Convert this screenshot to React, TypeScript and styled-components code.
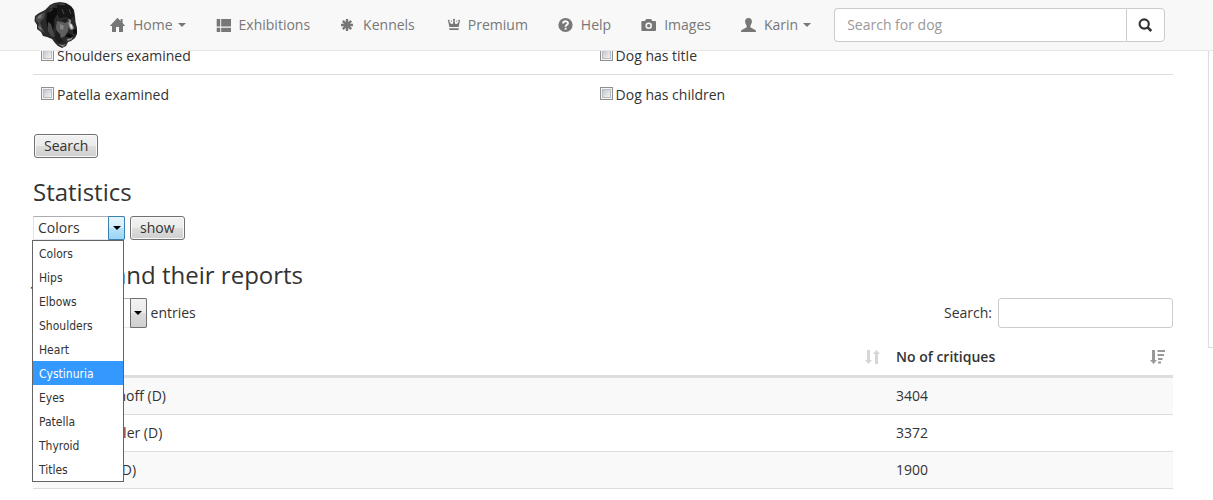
import React from 'react';
import styled, { createGlobalStyle } from 'styled-components';

const GlobalStyle = createGlobalStyle`
  *, *::before, *::after { box-sizing: border-box; }
  body {
    margin: 0;
    background: #fff;
    color: #333;
    font: 14px/20px "Open Sans", "Noto Sans", sans-serif;
  }
  button, input, select { font: inherit; color: inherit; margin: 0; }
`;

const Navbar = styled.header`
  position: fixed;
  inset: 0 0 auto 0;
  z-index: 10;
  display: flex;
  align-items: center;
  height: 51px;
  padding: 0 48px 0 33px;
  background: #f8f8f8;
  border-bottom: 1px solid #e7e7e7;
`;

const Brand = styled.a`
  display: block;
  flex: none;
  width: 46px;
  height: 50px;
  margin-right: 16px;
`;

const NavLinks = styled.nav`
  display: flex;
  flex: none;
`;

const NavLink = styled.a`
  display: flex;
  align-items: center;
  gap: 8px;
  padding: 15px;
  height: 50px;
  color: #777;
  text-decoration: none;
  white-space: nowrap;
`;

const Icon = styled.svg`
  display: block;
  flex: none;
  width: 15px;
  height: 16px;
  fill: currentColor;
`;

const Caret = styled.span`
  margin-left: -3px;
  border-top: 4px solid currentColor;
  border-left: 4px solid transparent;
  border-right: 4px solid transparent;
`;

const DogSearch = styled.form`
  display: flex;
  flex: 1;
  height: 34px;
  margin-left: 8px;
`;

const DogInput = styled.input`
  flex: 1;
  min-width: 0;
  padding: 6px 12px;
  border: 1px solid #ccc;
  border-right: 0;
  border-radius: 4px 0 0 4px;
  background: #fff;
  &::placeholder { color: #999; opacity: 1; }
`;

const DogButton = styled.button`
  display: flex;
  align-items: center;
  justify-content: center;
  width: 39px;
  padding: 0;
  border: 1px solid #ccc;
  border-radius: 0 4px 4px 0;
  background: #fff;
`;

const Page = styled.div`
  display: flex;
  align-items: flex-start;
  padding-top: 37px;
`;

const Main = styled.main`
  flex: 1;
  min-width: 0;
  padding: 0 35px 0 33px;
`;

const SidePanel = styled.aside`
  flex: none;
  width: 5px;
  height: 311px;
  border: 1px solid #ddd;
  border-right: 0;
`;

const CheckRow = styled.div`
  display: grid;
  grid-template-columns: 49fr 51fr;
  padding: 9px 0 8px;
  & + & { border-top: 1px solid #ddd; padding-top: 10px; }
`;

const CheckLabel = styled.label`
  display: flex;
  align-items: center;
  gap: 3px;
  padding-left: 8px;
`;

const Checkbox = styled.input`
  appearance: none;
  width: 13px;
  height: 13px;
  margin: 0 0 3px;
  border: 1px solid #8e8f8f;
  background: linear-gradient(135deg, #b4b9c2, #f6f6f6 85%);
  box-shadow: inset 0 0 0 1px #f4f4f4, inset 0 0 0 2px #b9bcc2;
`;

const PushButton = styled.button`
  height: 24px;
  padding: 0 9px;
  border: 1px solid #707070;
  border-radius: 3px;
  background: linear-gradient(#f2f2f2, #ebebeb 50%, #dddddd 50%, #cfcfcf);
  box-shadow: inset 0 0 0 1px #fafafa;
  line-height: 20px;
`;

const FormActions = styled.div`
  padding: 21px 1px 0;
`;

const Heading = styled.h2`
  margin: 0;
  font-size: 24px;
  line-height: 26px;
  font-weight: 400;
`;

const StatsHeading = styled(Heading)`
  margin: 21px 0 11px;
`;

const StatsRow = styled.div`
  display: flex;
  gap: 5px;
`;

const SelectBox = styled.div<{ $width: number; $height: number }>`
  position: relative;
  width: ${(p) => p.$width}px;
  height: ${(p) => p.$height}px;
`;

const Select = styled.select`
  appearance: none;
  width: 100%;
  height: 100%;
  padding: 0 20px 0 4px;
  border: 1px solid #abadb3;
  border-color: #abadb3 #dbdfe6 #e3e9ef #e2e3ea;
  border-radius: 0;
  background: #fff;
`;

const Arrow = styled.span<{ $active?: boolean }>`
  position: absolute;
  top: 0;
  right: 0;
  bottom: 0;
  display: flex;
  align-items: center;
  justify-content: center;
  width: 17px;
  pointer-events: none;
  border: 1px solid ${(p) => (p.$active ? '#3c7fb1' : '#707070')};
  border-radius: 0 2px 2px 0;
  background: ${(p) =>
    p.$active
      ? 'linear-gradient(#e6f5fd, #d2edfc 50%, #b9e3fa 50%, #9bd5f5)'
      : 'linear-gradient(#f2f2f2, #ebebeb 50%, #dddddd 50%, #cfcfcf)'};
  &::after {
    content: "";
    border-top: 4px solid #000;
    border-left: 4px solid transparent;
    border-right: 4px solid transparent;
  }
`;

const OptionList = styled.ul`
  position: absolute;
  top: 100%;
  left: -1px;
  z-index: 5;
  width: 92px;
  margin: 0;
  padding: 0;
  list-style: none;
  border: 1px solid #646464;
  background: #fff;
  font: 12px/22px "DejaVu Sans Condensed", "Noto Sans", sans-serif;
`;

const Option = styled.li<{ $active: boolean }>`
  padding: 2px 0 0 6px;
  color: ${(p) => (p.$active ? '#fff' : '#333')};
  background: ${(p) => (p.$active ? '#3399ff' : 'transparent')};
`;

const JudgesHeading = styled(Heading)`
  margin: 22px 0 10px;
`;

const TableTools = styled.div`
  display: flex;
  justify-content: space-between;
  height: 30px;
`;

const ToolLabel = styled.label`
  display: flex;
  align-items: center;
  gap: 4px;
`;

const FilterLabel = styled(ToolLabel)`
  gap: 6px;
`;

const FilterInput = styled.input`
  width: 175px;
  height: 30px;
  padding: 5px 10px;
  border: 1px solid #ccc;
  border-radius: 3px;
`;

const Table = styled.table`
  width: 100%;
  margin-top: 8px;
  border-collapse: separate;
  border-spacing: 0;
  table-layout: fixed;
`;

const Th = styled.th<{ $wide?: boolean }>`
  width: ${(p) => (p.$wide ? '75%' : '25%')};
  padding: 11px 8px 8px;
  border-bottom: 3px solid #ddd;
  text-align: left;
  font-weight: 600;
`;

const ThInner = styled.div`
  display: flex;
  align-items: center;
  justify-content: space-between;
  height: 20px;
`;

const Tr = styled.tr`
  &:nth-child(odd) { background: #f9f9f9; }
`;

const Td = styled.td`
  padding: 8px;
  border-bottom: 1px solid #ddd;
`;

const SortIcon = styled(Icon)<{ $faint?: boolean }>`
  color: ${(p) => (p.$faint ? '#d6d6d6' : '#999')};
`;

const DogLogo = () => (
  <svg width="46" height="50" viewBox="0 0 46 50" role="img" aria-label="Dog head">
    <defs>
      <filter id="fur" x="-20%" y="-20%" width="140%" height="140%">
        <feGaussianBlur stdDeviation="0.7" />
      </filter>
      <filter id="edge">
        <feGaussianBlur stdDeviation="0.5" />
      </filter>
    </defs>
    <path
      filter="url(#edge)"
      fill="#2b2b2b"
      d="M17 5 21 3 27 2 33 3 38 6 41 10 42 16 42.500 22 44 28 44 34 42 38 38 41 35 42 33 46 29 48 25 46 22 43 19 39 14 37 10 36 8 32 4 29 4 25 1.500 21 2 16 6 13 12 10Z"
    />
    <g filter="url(#fur)">
      <path fill="#4d4d4d" d="M3 17 8 14 12 12 11 18 7 22 9 28 12 33 8 31 5 27 6 23 3 21Z" />
      <path fill="#767676" d="M5 16 9 14 8 18 5 19ZM5 26 8 27 9 30 6 29Z" />
      <path fill="#111" d="M14 13 20 8 25 8 24 14 21 20 21 28 18 33 15 28 13 20Z" />
      <path fill="#464646" d="M15 22 18 24 20 31 22 37 18 36 15 31Z" />
      <path fill="#121212" d="M24 5 33 4 39 8 41 16 38 19 33 17 27 18 24 14Z" />
      <path fill="#5f5f5f" d="M24 21 29 22 34 21 36 26 35 31 32 36 28 38 24 34 23 27Z" />
      <path fill="#868686" d="M27 24 31 26 30 30 27 29ZM35 19 38 20 38 23 36 23Z" />
      <path fill="#1a1a1a" d="M29 20 33 19 34 22 31 23ZM23 30 27 34 28 39 31 42 26 43 22 38Z" />
      <path fill="#a8a8a8" d="M35 22 39 24 41 28 39 30 37 29 36 26Z" />
      <path fill="#e2e2e2" d="M37 24 39 25 39 28 38 28Z" />
      <path fill="#0a0a0a" d="M40 30 43 29 44 33 41 34ZM32 36 36 33 40 36 37 38Z" />
      <path fill="#8b8b8b" d="M34 39 38 38 40 37 38 40 34 41ZM25 44 30 45 33 44 30 47Z" />
      <path fill="none" stroke="#4a4a4a" d="M17 8 22 5M26 4 32 5M16 12 20 9M29 9 31 14M36 9 38 14" />
    </g>
  </svg>
);

const HomeIcon = () => (
  <Icon viewBox="0 0 15 16" aria-hidden="true">
    <path d="M7.5 .8 10.6 4V2h2v4.1L15 8.7v.4h-2V15H9V10H6v5H2V9.1H0v-.4Z" />
  </Icon>
);

const ListIcon = () => (
  <Icon viewBox="0 0 15 16" aria-hidden="true">
    <path d="M.7 2h3.500v3.600H.7ZM5.200 2H15v3.600H5.200ZM.7 5.600h3.500v4H.7ZM5.200 5.600H15v4H5.200ZM.7 10.700h3.500V15H.7ZM5.200 10.700H15V15H5.200Z" />
  </Icon>
);

const AsteriskIcon = () => (
  <Icon viewBox="0 0 15 16" aria-hidden="true">
    <path
      stroke="currentColor"
      strokeWidth="2.4"
      d="M7 2v12M1 8h12M2.800 3.800 11.200 12.200M11.200 3.800 2.800 12.200"
    />
  </Icon>
);

const CrownIcon = () => (
  <Icon viewBox="0 0 15 16" aria-hidden="true">
    <path d="M3.500 3.500 5.600 6.500 6.500 7 8 6.800 8.500 3h1L10 6.800 11.500 7 12.400 6.500 14.500 3.500 14.900 4 13.600 10H4.400L3.100 4ZM4.400 11.200h9.200V13H4.400Z" />
    <circle cx="3.700" cy="3.600" r="0.9" />
    <circle cx="6.300" cy="4.100" r="0.7" />
    <circle cx="9" cy="2.800" r="1" />
    <circle cx="11.700" cy="4.100" r="0.7" />
    <circle cx="14.100" cy="3.600" r="0.9" />
  </Icon>
);

const HelpIcon = () => (
  <Icon viewBox="0 0 15 16" aria-hidden="true">
    <circle cx="7.5" cy="8" r="7.100" />
    <path fill="none" stroke="#f8f8f8" strokeWidth="1.9" d="M5 6.600C5 3.400 10 3.500 10 6.200 10 7.800 7.600 7.800 7.600 9.800" />
    <path fill="#f8f8f8" d="M6.600 10.800h2v1.800h-2Z" />
  </Icon>
);

const CameraIcon = () => (
  <Icon viewBox="0 0 15 16" aria-hidden="true">
    <path
      fillRule="evenodd"
      d="M1 4h3l1.200-2h4.900l1.200 2H14q1 0 1 1v8q0 1-1 1H1.400q-1 0-1-1V5Q.4 4 1 4ZM7.700 5.100a3.600 3.600 0 1 0 .01 0ZM7.700 5.100a3.600 3.600 0 1 1-.01 0Z"
    />
    <circle cx="7.700" cy="8.700" r="2.500" fill="none" stroke="#f8f8f8" strokeWidth="1.500" />
  </Icon>
);

const UserIcon = () => (
  <Icon viewBox="0 0 15 16" aria-hidden="true">
    <path d="M7.500.9C9.800.9 11 2.500 10.900 4.700 10.800 6.700 9.800 7.600 9.400 8.700c-.3 1 .2 1.900 1.200 2.400l3.300 1.600c.7.4 1.100 1.100 1.100 2.300H0c0-1.200.4-1.900 1.100-2.300l3.300-1.600c1-.5 1.500-1.400 1.200-2.400C5.200 7.600 4.200 6.700 4.100 4.700 4 2.500 5.200.9 7.500.9Z" />
  </Icon>
);

const SearchIcon = () => (
  <Icon viewBox="0 0 15 16" aria-hidden="true">
    <circle cx="6.200" cy="7" r="4.600" fill="none" stroke="currentColor" strokeWidth="2.100" />
    <path stroke="currentColor" strokeWidth="2.600" d="M9.600 10.400 13.300 14" />
  </Icon>
);

const navItems = [
  { label: 'Home', icon: <HomeIcon />, menu: true },
  { label: 'Exhibitions', icon: <ListIcon /> },
  { label: 'Kennels', icon: <AsteriskIcon /> },
  { label: 'Premium', icon: <CrownIcon /> },
  { label: 'Help', icon: <HelpIcon /> },
  { label: 'Images', icon: <CameraIcon /> },
  { label: 'Karin', icon: <UserIcon />, menu: true },
];

const filters = [
  ['Shoulders examined', 'Dog has title'],
  ['Patella examined', 'Dog has children'],
];

const statistics = [
  'Colors', 'Hips', 'Elbows', 'Shoulders', 'Heart',
  'Cystinuria', 'Eyes', 'Patella', 'Thyroid', 'Titles',
];

const judges = [
  { name: 'Ulrich Bischhoff (D)', critiques: 3404 },
  { name: 'Werner Kessler (D)', critiques: 3372 },
  { name: 'Ute Fischer (D)', critiques: 1900 },
];

export default function App() {
  return (
    <>
      <GlobalStyle />
      <Navbar>
        <Brand href="#"><DogLogo /></Brand>
        <NavLinks>
          {navItems.map((item) => (
            <NavLink href="#" key={item.label}>
              {item.icon}
              {item.label}
              {item.menu && <Caret />}
            </NavLink>
          ))}
        </NavLinks>
        <DogSearch>
          <DogInput type="text" placeholder="Search for dog" aria-label="Search for dog" />
          <DogButton type="button" aria-label="Search"><SearchIcon /></DogButton>
        </DogSearch>
      </Navbar>
      <Page>
        <Main>
          {filters.map((row) => (
            <CheckRow key={row[0]}>
              {row.map((label) => (
                <CheckLabel key={label}>
                  <Checkbox type="checkbox" />
                  {label}
                </CheckLabel>
              ))}
            </CheckRow>
          ))}
          <FormActions>
            <PushButton type="button">Search</PushButton>
          </FormActions>

          <StatsHeading>Statistics</StatsHeading>
          <StatsRow>
            <SelectBox $width={92} $height={24}>
              <Select aria-label="Statistics" defaultValue="Colors">
                {statistics.map((s) => <option key={s}>{s}</option>)}
              </Select>
              <Arrow $active />
              <OptionList>
                {statistics.map((s) => (
                  <Option key={s} $active={s === 'Cystinuria'}>{s}</Option>
                ))}
              </OptionList>
            </SelectBox>
            <PushButton type="button">show</PushButton>
          </StatsRow>

          <JudgesHeading>Judges and their reports</JudgesHeading>
          <TableTools>
            <ToolLabel>
              Show
              <SelectBox $width={74} $height={30}>
                <Select defaultValue="10">
                  <option>10</option>
                  <option>25</option>
                </Select>
                <Arrow />
              </SelectBox>
              entries
            </ToolLabel>
            <FilterLabel>
              Search:
              <FilterInput type="search" />
            </FilterLabel>
          </TableTools>
          <Table>
            <thead>
              <tr>
                <Th $wide>
                  <ThInner>
                    Judge
                    <SortIcon $faint viewBox="0 0 15 16" aria-hidden="true">
                      <path d="M2 1h3v10h2l-3.500 4L0 11h2ZM10 15h3V5h2L11.500 1 8 5h2Z" />
                    </SortIcon>
                  </ThInner>
                </Th>
                <Th>
                  <ThInner>
                    No of critiques
                    <SortIcon viewBox="0 0 15 16" aria-hidden="true">
                      <path d="M2 1h3v10h2l-3.500 4L0 11h2ZM7.500 1H15v2H7.500ZM7.500 5H14v2H7.500ZM8 9h4.500v2H8ZM8 12.500h3v2H8Z" />
                    </SortIcon>
                  </ThInner>
                </Th>
              </tr>
            </thead>
            <tbody>
              {judges.map((j) => (
                <Tr key={j.name}>
                  <Td>{j.name}</Td>
                  <Td>{j.critiques}</Td>
                </Tr>
              ))}
            </tbody>
          </Table>
        </Main>
        <SidePanel />
      </Page>
    </>
  );
}
